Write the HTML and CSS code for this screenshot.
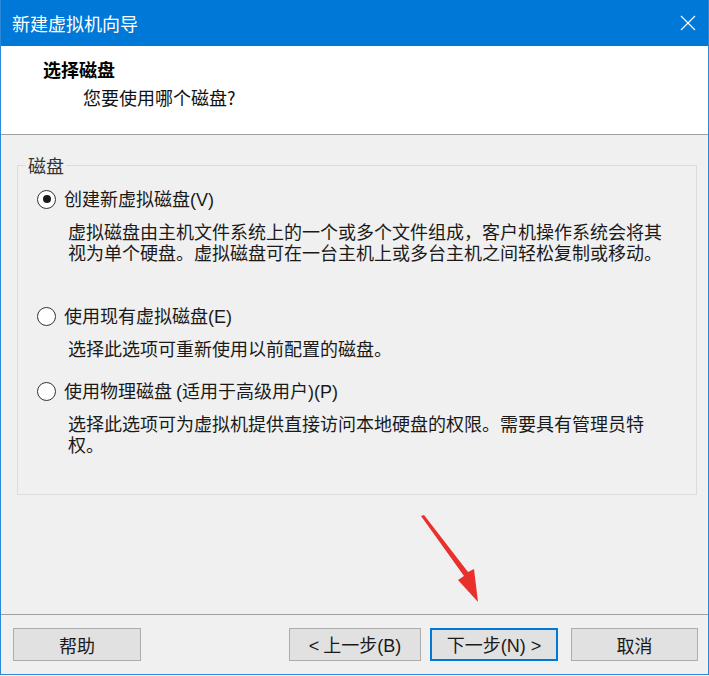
FILE: index.html
```html
<!DOCTYPE html>
<html lang="zh-CN">
<head>
<meta charset="utf-8">
<title>新建虚拟机向导</title>
<link rel="stylesheet" href="styles.css">
</head>
<body>
<div class="window">
  <div class="titlebar">
    <span class="title">新建虚拟机向导</span>
    <svg class="close" width="16" height="16" viewBox="0 0 16 16"><path d="M1 1 L15 15 M15 1 L1 15" stroke="#ffffff" stroke-width="1.2" fill="none"/></svg>
  </div>
  <div class="header">
    <div class="h-title">选择磁盘</div>
    <div class="h-sub">您要使用哪个磁盘?</div>
  </div>
  <div class="content">
    <fieldset class="group">
      <legend class="legend">磁盘</legend>
      <div class="option opt1">
        <span class="radio checked"><span class="dot"></span></span>
        <span class="label">创建新虚拟磁盘<span class="latin">(V)</span></span>
      </div>
      <div class="desc">
        <div class="line">虚拟磁盘由主机文件系统上的一个或多个文件组成，客户机操作系统会将其</div>
        <div class="line">视为单个硬盘。虚拟磁盘可在一台主机上或多台主机之间轻松复制或移动。</div>
      </div>
      <div class="option opt2">
        <span class="radio"></span>
        <span class="label">使用现有虚拟磁盘<span class="latin">(E)</span></span>
      </div>
      <div class="desc">
        <div class="line">选择此选项可重新使用以前配置的磁盘。</div>
      </div>
      <div class="option opt3">
        <span class="radio"></span>
        <span class="label">使用物理磁盘 <span class="latin">(</span>适用于高级用户<span class="latin">)(P)</span></span>
      </div>
      <div class="desc">
        <div class="line">选择此选项可为虚拟机提供直接访问本地硬盘的权限。需要具有管理员特</div>
        <div class="line">权。</div>
      </div>
    </fieldset>
  </div>
  <div class="footer">
    <button class="btn btn-help">帮助</button>
    <span class="spacer"></span>
    <button class="btn btn-back"><span class="latin">&lt;</span> 上一步<span class="latin">(B)</span></button>
    <button class="btn btn-next default">下一步<span class="latin">(N) &gt;</span></button>
    <button class="btn btn-cancel">取消</button>
  </div>
  <svg class="arrow" width="709" height="675" viewBox="0 0 709 675">
    <polygon points="421,516 424,515 468,572 474,569 478,602 458,580 464,576" fill="#e8302c"/>
  </svg>
</div>
</body>
</html>
```

FILE: styles.css
```css
* { box-sizing: border-box; }
html, body {
  margin: 0;
  padding: 0;
  background: #ffffff;
}
body {
  font-family: "Noto Sans CJK SC", "Noto Sans", sans-serif;
  font-size: 18px;
  color: #1a1a1a;
}
.window {
  position: relative;
  width: 709px;
  height: 675px;
  display: flex;
  flex-direction: column;
  border: 1px solid #2b88d8;
  border-top: none;
  overflow: hidden;
}
.titlebar {
  height: 46px;
  margin: 0 -1px;
  background: #0078d7;
  display: flex;
  align-items: center;
  justify-content: space-between;
  padding: 0 13px 0 12px;
  color: #ffffff;
}
.title {
  font-size: 18px;
  line-height: 24px;
  font-weight: 400;
}
.close { display: block; }
.header {
  height: 89px;
  background: #ffffff;
  border-bottom: 1px solid #a0a0a0;
  padding-top: 11px;
}
.h-title {
  padding-left: 42px;
  font-size: 18px;
  line-height: 24px;
  font-weight: 700;
  color: #000000;
}
.h-sub {
  padding-left: 82px;
  margin-top: 4px;
  font-size: 18px;
  line-height: 24px;
  color: #111111;
}
.content {
  flex: 1;
  background: #f0f0f0;
  padding: 20px 11px 0 16px;
}
.group {
  margin: 0;
  border: 1px solid #dcdcdc;
  padding: 0 0 39px 8px;
  min-width: 0;
}
.legend {
  padding: 0 2px;
  font-size: 18px;
  line-height: 20px;
  color: #333333;
}
.option {
  display: flex;
  align-items: center;
  height: 24px;
  padding-left: 11px;
  gap: 8px;
}
.opt1 { margin-top: 12px; }
.opt2 { margin-top: 41px; }
.opt3 { margin-top: 20px; }
.radio {
  width: 19px;
  height: 19px;
  border: 1.5px solid #333333;
  border-radius: 50%;
  background: #ffffff;
  display: flex;
  align-items: center;
  justify-content: center;
  flex: none;
}
.dot {
  width: 8px;
  height: 8px;
  border-radius: 50%;
  background: #1a1a1a;
}
.label {
  font-size: 18px;
  line-height: 24px;
  color: #1a1a1a;
}
.latin {
  font-family: "Liberation Sans", Arial, sans-serif;
}
.desc {
  padding-left: 42px;
  margin-top: 10px;
  display: flex;
  flex-direction: column;
  color: #1a1a1a;
}
.line {
  font-size: 18px;
  line-height: 21px;
  white-space: nowrap;
}
.footer {
  height: 60px;
  border-top: 1px solid #a0a0a0;
  background: #f0f0f0;
  display: flex;
  align-items: flex-start;
  padding: 13px 10px 0 12px;
}
.spacer { flex: 1; }
.btn {
  height: 33px;
  margin: 0;
  padding: 0;
  background: #e1e1e1;
  border: 1px solid #adadad;
  font-family: "Noto Sans CJK SC", "Noto Sans", sans-serif;
  font-size: 18px;
  line-height: 24px;
  color: #1a1a1a;
}
.btn-help { width: 128px; }
.btn-back { width: 132px; }
.btn-next { width: 128px; margin-left: 9px; }
.btn-cancel { width: 127px; margin-left: 13px; }
.default { border: 2px solid #0078d7; }
.arrow {
  position: absolute;
  left: -1px;
  top: 0;
  pointer-events: none;
}
```
